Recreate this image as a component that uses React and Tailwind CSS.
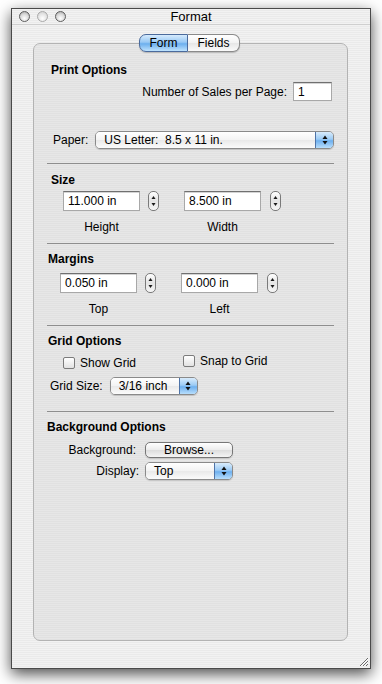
import React from 'react';

const stripes = 'bg-[repeating-linear-gradient(180deg,#f2f2f2_0px,#f2f2f2_1px,#eaeaea_1px,#eaeaea_2px)]';

const Light = ({ dim }) => (
  <div
    className={
      dim
        ? 'w-[11px] h-[11px] rounded-full border border-[#a9a9a9] bg-[radial-gradient(circle_at_50%_70%,#ffffff_0%,#e2e2e2_60%,#c9c9c9_100%)]'
        : 'w-[11px] h-[11px] rounded-full border border-[#5e5e5e] bg-[radial-gradient(circle_at_50%_70%,#ffffff_0%,#d8d8d8_55%,#9c9c9c_100%)]'
    }
  />
);

const TextBox = ({ value, wide }) => (
  <div
    className={
      (wide ? 'w-[77px] h-[20px] ' : 'w-[39px] h-[19px] ') +
      'bg-white border border-[#a8a8a8] border-t-[#707070] shadow-[inset_0_1px_0_#d4d4d4] pl-[4px] leading-[18px] text-[12px]'
    }
  >
    {value}
  </div>
);

const Stepper = () => (
  <div className="w-[11px] h-[20px] rounded-[5px] border border-[#7a7a7a] bg-[linear-gradient(180deg,#ffffff,#e4e4e4_50%,#f6f6f6)] flex items-center justify-center">
    <svg width="9" height="18" viewBox="0 0 9 18">
      <path d="M4.5 4 L6.5 7 L2.5 7 Z" fill="#1a1a1a" />
      <path d="M4.5 14 L6.5 11 L2.5 11 Z" fill="#1a1a1a" />
    </svg>
  </div>
);

const Arrows = () => (
  <svg width="8" height="12" viewBox="0 0 8 12">
    <path d="M4 1.5 L6.5 5 L1.5 5 Z" fill="#111" />
    <path d="M4 10.5 L6.5 7 L1.5 7 Z" fill="#111" />
  </svg>
);

const Popup = ({ label, w }) => (
  <div className={w + ' h-[18px] flex rounded-[5px] border border-[#8a8a8a] overflow-hidden shadow-[0_1px_1px_rgba(0,0,0,0.15)]'}>
    <div className="flex-1 bg-[linear-gradient(180deg,#ffffff,#f3f3f3_50%,#e9e9e9_51%,#fbfbfb)] pl-[8px] leading-[16px] text-[12px] whitespace-pre">{label}</div>
    <div className="w-[18px] border-l border-[#4f74a8] bg-[linear-gradient(180deg,#d9ecfc,#9ccbf5_45%,#6eb0ef_55%,#b8defc)] flex items-center justify-center">
      <Arrows />
    </div>
  </div>
);

const Field = ({ value, label, gap }) => (
  <div className="flex flex-col">
    <div className={'flex items-start ' + gap}>
      <TextBox value={value} wide />
      <Stepper />
    </div>
    <div className="w-[77px] text-center mt-[8px] h-[16px] leading-[16px]">{label}</div>
  </div>
);

const Check = ({ label }) => (
  <div className="flex items-center">
    <div className="w-[12px] h-[12px] rounded-[2px] border border-[#7b7b7b] bg-[linear-gradient(180deg,#ffffff,#e2e2e2)]" />
    <span className="ml-[5px] leading-[14px]">{label}</span>
  </div>
);

const Rule = () => <div className="ml-[13px] w-[287px] h-px bg-[#8e8e8e]" />;

const Heading = ({ children, className }) => (
  <div className={'font-bold h-[16px] leading-[16px] ' + className}>{children}</div>
);

export default function App() {
  return (
    <div className="w-[382px] h-[684px] bg-white pt-[8px] pl-[11px] font-['Liberation_Sans',Arial,sans-serif] text-[12px] text-black">
      <div className={'relative w-[360px] h-[661px] border border-[#4a4a4a] shadow-[0_5px_14px_rgba(0,0,0,0.7)] flex flex-col ' + stripes}>
        {/* title bar */}
        <div className="h-[16px] border-b border-[#cfcfcf] grid grid-cols-[1fr_auto_1fr] items-center">
          <div className="flex items-center pl-[7px] gap-[7px]">
            <Light />
            <Light dim />
            <Light />
          </div>
          <div className="text-[13px] leading-[15px]">Format</div>
          <div />
        </div>

        {/* tab panel */}
        <div className="relative mt-[18px] ml-[21px] w-[315px] h-[598px] rounded-[7px] border border-[#b3b3b3] bg-[repeating-linear-gradient(180deg,#e7e7e7_0px,#e7e7e7_1px,#e1e1e1_1px,#e1e1e1_2px)] flex flex-col">
          <div className="absolute top-[-10px] left-[105px] flex h-[18px] shadow-[0_1px_1px_rgba(0,0,0,0.2)] rounded-[7px]">
            <div className="w-[49px] rounded-l-[7px] border border-[#4a6a9c] bg-[linear-gradient(180deg,#d6ebfd,#98c8f4_45%,#6cafee_55%,#bfe3fd)] text-center leading-[16px]">Form</div>
            <div className="w-[52px] rounded-r-[7px] border border-l-0 border-[#8a8a8a] bg-[linear-gradient(180deg,#ffffff,#f2f2f2_50%,#e6e6e6_51%,#fafafa)] text-center leading-[16px]">Fields</div>
          </div>

          {/* Print Options */}
          <Heading className="mt-[18px] pl-[17px]">Print Options</Heading>
          <div className="mt-[4px] flex items-center justify-end pr-[15px] gap-[6px]">
            <span>Number of Sales per Page:</span>
            <TextBox value="1" />
          </div>
          <div className="mt-[30px] pl-[19px] flex items-center gap-[7px]">
            <span>Paper:</span>
            <Popup label="US Letter:  8.5 x 11 in." w="w-[239px]" />
          </div>
          <div className="mt-[14px]"><Rule /></div>

          {/* Size */}
          <Heading className="mt-[8px] pl-[17px]">Size</Heading>
          <div className="mt-[3px] pl-[29px] flex gap-[25px]">
            <Field value="11.000 in" label="Height" gap="gap-[8px]" />
            <Field value="8.500 in" label="Width" gap="gap-[9px]" />
          </div>
          <div className="mt-[8px]"><Rule /></div>

          {/* Margins */}
          <Heading className="mt-[7px] pl-[14px]">Margins</Heading>
          <div className="mt-[6px] pl-[26px] flex gap-[25px]">
            <Field value="0.050 in" label="Top" gap="gap-[8px]" />
            <Field value="0.000 in" label="Left" gap="gap-[9px]" />
          </div>
          <div className="mt-[8px]"><Rule /></div>

          {/* Grid Options */}
          <Heading className="mt-[7px] pl-[14px]">Grid Options</Heading>
          <div className="mt-[5px] pl-[29px] flex items-start">
            <div className="w-[120px] mt-[2px]"><Check label="Show Grid" /></div>
            <Check label="Snap to Grid" />
          </div>
          <div className="mt-[7px] pl-[16px] flex items-center gap-[7px]">
            <span>Grid Size:</span>
            <Popup label="3/16 inch" w="w-[88px]" />
          </div>
          <div className="mt-[16px]"><Rule /></div>

          {/* Background Options */}
          <Heading className="mt-[7px] pl-[13px]">Background Options</Heading>
          <div className="mt-[6px] flex items-center">
            <div className="w-[111px] text-right pr-[9px]">Background:</div>
            <div className="w-[88px] h-[16px] rounded-[5px] border border-[#777] bg-[linear-gradient(180deg,#ffffff,#ececec_50%,#dcdcdc_51%,#f4f4f4)] text-center leading-[14px] shadow-[0_1px_1px_rgba(0,0,0,0.15)]">Browse...</div>
          </div>
          <div className="mt-[3px] flex items-center">
            <div className="w-[111px] text-right pr-[6px]">Display:</div>
            <Popup label="Top" w="w-[88px]" />
          </div>
        </div>

        {/* resize grip */}
        <svg className="absolute right-[1px] bottom-[1px]" width="12" height="12" viewBox="0 0 12 12">
          <path d="M11 3 L3 11 M11 6 L6 11 M11 9 L9 11" stroke="#6a6a6a" strokeWidth="1" />
          <path d="M11.5 3.5 L3.5 11.5 M11.5 6.5 L6.5 11.5" stroke="#ffffff" strokeWidth="0.8" />
        </svg>
      </div>
    </div>
  );
}
